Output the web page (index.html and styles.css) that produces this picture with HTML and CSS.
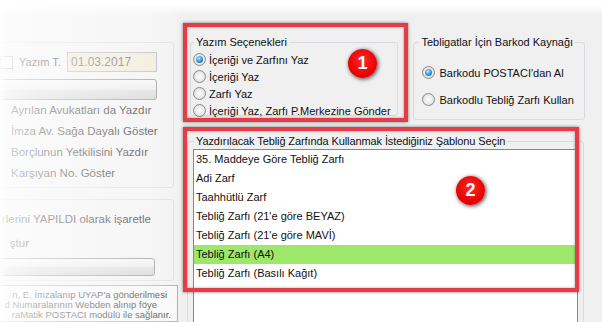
FILE: index.html
```html
<!DOCTYPE html>
<html lang="tr">

<head>
    <meta charset="UTF-8">
    <title>Tebligat Yazdır</title>
    <link rel="stylesheet" href="styles.css">
</head>

<body>
    <div class="window">
        <div class="side">
            <fieldset class="box side-group first">
                <div class="date-row">
                    <span class="check"></span>
                    <span class="lbl">Yazım T.</span>
                    <span class="date-box">01.03.2017</span>
                </div>
                <div class="bar-btn"></div>
                <div class="side-line">Ayrılan Avukatları da Yazdır</div>
                <div class="side-line">İmza Av. Sağa Dayalı Göster</div>
                <div class="side-line">Borçlunun Yetkilisini Yazdır</div>
                <div class="side-line">Karşıyan No. Göster</div>
            </fieldset>
            <fieldset class="box side-group second">
                <div class="cut-line line-a">rlerini YAPILDI olarak işaretle</div>
                <div class="cut-line line-b">ştur</div>
                <div class="bar-btn short"></div>
            </fieldset>
            <div class="note">
                <div class="cut-line n1">n, E. İmzalanıp UYAP'a gönderilmesi</div>
                <div class="cut-line n2">d Numaralarının Webden alınıp föye</div>
                <div class="cut-line n3">raMatik POSTACI modülü ile sağlanır.</div>
            </div>
        </div>

        <div class="main">
            <div class="top-row">
                <fieldset class="box group opts">
                    <legend>Yazım Seçenekleri</legend>
                    <label class="radio-row"><span class="radio on"></span>İçeriği ve Zarfını Yaz</label>
                    <label class="radio-row"><span class="radio"></span>İçeriği Yaz</label>
                    <label class="radio-row"><span class="radio"></span>Zarfı Yaz</label>
                    <label class="radio-row"><span class="radio"></span>İçeriği Yaz, Zarfı P.Merkezine Gönder</label>
                </fieldset>
                <fieldset class="box group barcode">
                    <legend>Tebligatlar İçin Barkod Kaynağı</legend>
                    <label class="radio-row"><span class="radio on"></span>Barkodu POSTACI'dan Al</label>
                    <label class="radio-row"><span class="radio"></span>Barkodlu Tebliğ Zarfı Kullan</label>
                </fieldset>
            </div>
            <fieldset class="box group templates">
                <legend>Yazdırılacak Tebliğ Zarfında Kullanmak İstediğiniz Şablonu Seçin</legend>
                <ul class="list">
                    <li>35. Maddeye Göre Tebliğ Zarfı</li>
                    <li>Adi Zarf</li>
                    <li>Taahhütlü Zarf</li>
                    <li>Tebliğ Zarfı (21'e göre BEYAZ)</li>
                    <li>Tebliğ Zarfı (21'e göre MAVİ)</li>
                    <li class="sel">Tebliğ Zarfı (A4)</li>
                    <li>Tebliğ Zarfı (Basılı Kağıt)</li>
                </ul>
            </fieldset>
        </div>

        <div class="fade"></div>
        <div class="mark mark-1"></div>
        <div class="mark mark-2"></div>
        <div class="badge badge-1">1</div>
        <div class="badge badge-2">2</div>
    </div>
</body>

</html>
```
FILE: styles.css
```css
body {
    margin: 0;
    width: 602px;
    height: 322px;
    overflow: hidden;
    background: #f0f0f0;
    font-family: "Liberation Sans", Arial, sans-serif;
    font-size: 11px;
    color: #111;
}

.window {
    position: relative;
    display: flex;
    height: 322px;
}

/* generic group box */
.box {
    margin: 0;
    padding: 0;
    min-width: 0;
    border: 1px solid #d5dbe0;
    border-radius: 3px;
    box-sizing: border-box;
}

.group legend {
    padding: 0 2px;
    line-height: 14px;
}

/* left column, half cut off by the fade */
.side {
    width: 184px;
    margin-left: -10px;
    padding-top: 42px;
    flex-shrink: 0;
    display: flex;
    flex-direction: column;
}

.side-group.first {
    height: 146px;
}

.date-row {
    display: flex;
    align-items: center;
    height: 20px;
    margin-top: 9px;
    padding-right: 16px;
}

.check {
    width: 13px;
    height: 13px;
    box-sizing: border-box;
    margin-left: 9px;
    border: 1px solid #8e8f8f;
    background: linear-gradient(#e9e9e9, #ffffff);
}

.lbl {
    margin-left: 6px;
}

.date-box {
    margin-left: auto;
    width: 90px;
    height: 20px;
    box-sizing: border-box;
    padding-left: 3px;
    border: 1px solid #abadb3;
    background: #ece6d0;
    line-height: 18px;
    font-size: 12px;
    color: #555;
}

.bar-btn {
    height: 21px;
    margin: 7px 16px 0 0;
    box-sizing: border-box;
    border: 1px solid #8a8a8a;
    border-radius: 3px;
    background: linear-gradient(#f4f4f4, #e6e6e6 50%, #d8d8d8 51%, #cdcdcd);
}

.bar-btn.short {
    height: 18px;
    margin: 5px 18px 0 0;
}

.side-line {
    height: 21px;
    line-height: 21px;
    padding-left: 20px;
    white-space: nowrap;
    font-size: 11.5px;
}

.side-group.second {
    margin-top: 11px;
    height: 82px;
    padding-top: 9px;
}

.cut-line {
    display: flex;
    justify-content: flex-end;
    white-space: nowrap;
    height: 20px;
    line-height: 20px;
}

.line-a {
    padding-right: 22px;
    font-size: 11.5px;
}

.line-b {
    margin-top: 4px;
    padding-right: 144px;
    font-size: 11.5px;
}

.note {
    flex: 1;
    margin: 4px -4px 0 0;
    padding-top: 4px;
    border: 1px solid #a5a5a5;
    background: #f7f7f7;
    font-size: 9.5px;
}

.note .cut-line {
    height: 10px;
    line-height: 10px;
}

.n1 { padding-right: 10px; }
.n2 { padding-right: 20px; }
.n3 { padding-right: 6px; }

/* right part */
.main {
    width: 398px;
    margin-left: 13px;
    padding-top: 35px;
    flex-shrink: 0;
}

.top-row {
    display: flex;
    align-items: flex-start;
}

.opts {
    width: 209px;
    height: 81px;
    margin-left: 3px;
    padding-top: 2px;
}

.opts legend {
    margin-left: 3px;
}

.radio-row {
    display: flex;
    align-items: center;
    gap: 3px;
    height: 17px;
    padding-left: 2px;
    white-space: nowrap;
}

.radio {
    width: 13px;
    height: 13px;
    box-sizing: border-box;
    border-radius: 50%;
    border: 1px solid #8b8b8b;
    background: radial-gradient(circle at 50% 50%, #fdfdfd 0, #e9e9e9 55%, #cfcfcf 100%);
    display: flex;
    align-items: center;
    justify-content: center;
}

.radio.on::after {
    content: "";
    width: 7px;
    height: 7px;
    border-radius: 50%;
    background: radial-gradient(circle at 40% 35%, #c4ecff 0, #3d9de2 45%, #0d5299 100%);
}

.barcode {
    width: 172px;
    height: 85px;
    margin-left: 15px;
    padding-top: 15px;
}

.barcode legend {
    margin-left: 5px;
}

.barcode .radio-row {
    padding-left: 8px;
    gap: 4px;
}

.barcode .radio-row + .radio-row {
    margin-top: 10px;
}

.templates {
    width: 397px;
    height: 200px;
    margin-top: 14px;
}

.templates legend {
    margin-left: 6px;
    letter-spacing: -0.1px;
}

.list {
    width: 385px;
    height: 180px;
    box-sizing: border-box;
    margin: 1px 0 0 5px;
    padding: 0;
    list-style: none;
    border: 1px solid #828790;
    background: #fff;
}

.list li {
    height: 19px;
    line-height: 19px;
    padding-left: 2px;
    white-space: nowrap;
}

.list li.sel {
    background: #9de86a;
}

/* screenshot fade on the left and top */
.fade {
    position: absolute;
    inset: 0;
    pointer-events: none;
    background:
        linear-gradient(to bottom, #fff 0, #fff 4px, rgba(255, 255, 255, 0) 16px),
        linear-gradient(to right, rgba(255, 255, 255, .95) 0, rgba(255, 255, 255, .8) 8px, rgba(255, 255, 255, .66) 40px, rgba(255, 255, 255, .5) 100px, rgba(255, 255, 255, .38) 150px, rgba(255, 255, 255, .25) 172px, rgba(255, 255, 255, 0) 182px);
}

/* annotation frames and numbered badges */
.mark {
    position: absolute;
    box-sizing: border-box;
    border: 4px solid #e63c48;
    box-shadow: 0 0 3px rgba(0, 0, 0, .5), inset 0 0 3px rgba(0, 0, 0, .35);
}

.mark-1 {
    left: 183px;
    top: 23px;
    width: 225px;
    height: 99px;
}

.mark-2 {
    left: 183px;
    top: 127px;
    width: 396px;
    height: 165px;
}

.badge {
    position: absolute;
    width: 29px;
    height: 29px;
    border-radius: 50%;
    background: radial-gradient(circle at 50% 40%, #ff2a2a 0, #e80000 65%, #c80000 100%);
    box-shadow: 1px 1px 4px rgba(0, 0, 0, .75);
    color: #fff;
    font-weight: bold;
    font-size: 18px;
    display: flex;
    align-items: center;
    justify-content: center;
}

.badge-1 {
    left: 348px;
    top: 49px;
}

.badge-2 {
    left: 456px;
    top: 176px;
}
```
